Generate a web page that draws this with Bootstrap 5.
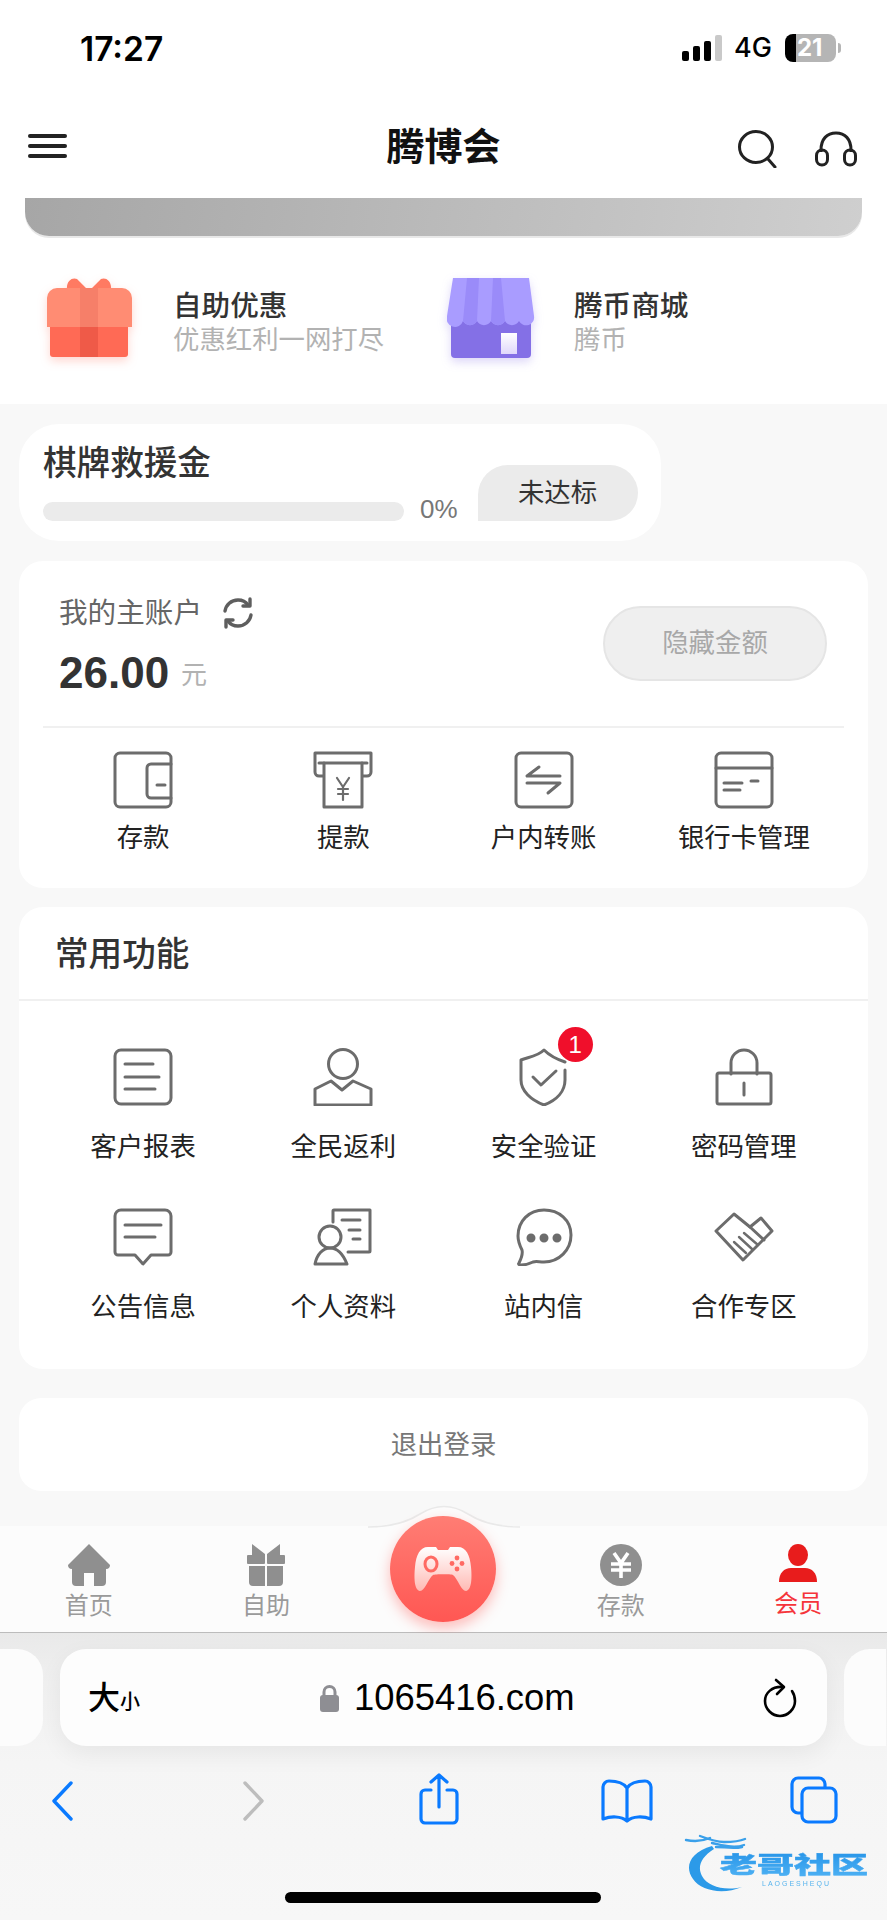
<!DOCTYPE html>
<html lang="zh-CN">
<head>
  <meta charset="UTF-8" />
  <meta name="viewport" content="width=device-width, initial-scale=1.0" />
  <title>腾博会</title>
  <link href="https://cdn.jsdelivr.net/npm/bootstrap@5.3.0/dist/css/bootstrap.min.css" rel="stylesheet" />
  <style>
    body {
      width: 887px;
      height: 1920px;
      overflow: hidden;
      background-color: #f8f8f8;
      font-family: "Liberation Sans", "Noto Sans CJK SC", sans-serif;
      color: #222;
    }
    svg { display: block; }
    .line-ico { fill: none; stroke: #6c6c6c; stroke-width: 3; stroke-linejoin: round; stroke-linecap: round; }
    .status-row { height: 100px; padding: 33px 46px 0 80px; background: #fff; }
    .status-time { font: 600 33.5px/1 Inter, sans-serif; color: #000; }
    .status-net { font: 500 27px/1 Inter, sans-serif; color: #000; margin: 1px 13px 0 12px; }
    .signal { margin-top: 2px; }
    .batt { width: 51px; height: 28px; margin-top: 1px; border-radius: 8px; background: linear-gradient(90deg, #000 0 11px, #b5b5b5 11px); color: #fff; font: 700 24px/28px Inter, sans-serif; padding-left: 12px; }
    .batt-nub { width: 3px; height: 10px; background: #b5b5b5; border-radius: 0 3px 3px 0; margin: 10px 0 0 2px; }
    .top-head { height: 98px; background: #fff; padding: 0 29px 0 28px; }
    .burger { width: 39px; margin-bottom: 6px; }
    .burger i { display: block; height: 4px; background: #222; border-radius: 2px; margin-bottom: 6px; }
    .top-title { font-size: 38px; font-weight: 700; color: #111; left: 0; right: 0; top: 18px; line-height: 58px; }
    .head-tools { gap: 37px; }
    .promo-wrap { background: #fff; height: 206px; padding: 0 25px; }
    .grey-band { height: 38px; border-radius: 0 0 24px 24px; background: linear-gradient(100deg, #a6a6a6, #cfcfcf); box-shadow: 0 2px 0 #e8e8e8; }
    .promo-row { padding: 42px 0 0 22px; }
    .promo-cell { width: 400px; gap: 41px; }
    .promo-cell.is-shop { gap: 39px; }
    .promo-gift { filter: drop-shadow(0 4px 5px rgba(255, 110, 90, .28)); }
    .promo-shop { filter: drop-shadow(0 4px 5px rgba(132, 112, 230, .28)); }
    .promo-name { font-size: 28.6px; font-weight: 500; color: #333; line-height: 38px; margin-top: 9px; }
    .promo-sub { font-size: 26.4px; color: #b2b2b2; line-height: 34px; margin-top: -2px; }
    .rescue-box { width: 642px; height: 117px; margin: 20px 0 20px 19px; background: #fff; border-radius: 40px; padding: 16px 23px 0 24px; }
    .rescue-title { font-size: 33.6px; font-weight: 500; line-height: 48px; color: #333; }
    .rescue-body { margin-top: -23px; }
    .rescue-bar { width: 361px; height: 19px; border-radius: 10px; background: #ebebeb; }
    .rescue-pct { font: 26px/24px "Liberation Sans", sans-serif; color: #777; margin: 0 20px 0 16px; }
    .rescue-btn { width: 160px; height: 56px; font-size: 26.4px; line-height: 56px; text-align: center; background: #ebebeb; color: #333; border-radius: 30px 28px 28px 0; }
    .white-panel { margin: 0 19px; background: #fff; border-radius: 24px; }
    .acct-panel { height: 327px; padding: 0 24px; margin-bottom: 19px; }
    .acct-top { height: 167px; padding: 30px 17px 0 16px; border-bottom: 2px solid #f0f0f0; }
    .acct-label { font-size: 28.6px; line-height: 44px; color: #666; }
    .refresh-ico { margin-left: 20px; }
    .acct-money { font: 700 44px/50px "Liberation Sans", sans-serif; color: #333; margin-top: 13px; }
    .acct-unit { font-size: 26px; color: #b2b2b2; margin: 15px 0 0 12px; line-height: 50px; }
    .hide-btn { width: 224px; height: 75px; margin-top: 15px; border: 2px solid #e5e5e5; border-radius: 38px; background: #efefef; color: #a8a8a8; font-size: 26.4px; line-height: 71px; text-align: center; }
    .ico-cell { text-align: center; }
    .ico-label { font-size: 26.4px; line-height: 36px; color: #222; }
    .acct-links { padding-top: 23px; }
    .acct-links .ico-label { margin-top: 11px; }
    .func-panel { height: 462px; margin-bottom: 29px; }
    .func-title { height: 94px; padding-left: 36px; font-size: 33.6px; font-weight: 500; line-height: 95px; color: #333; border-bottom: 2px solid #f0f0f0; }
    .func-grid { padding: 47px 24px 0; }
    .func-grid .ico-cell { height: 160px; }
    .func-grid .ico-label { margin-top: 23px; }
    .ico-holder { width: 60px; height: 58px; margin: 0 auto; }
    .red-dot { width: 35px; height: 35px; border-radius: 50%; background: #f00f2b; color: #fff; font-size: 24px; line-height: 35px; top: -21px; left: 44px; }
    .logout-panel { height: 93px; line-height: 95px; text-align: center; font-size: 26.4px; color: #777; margin-bottom: 35px; border-radius: 22px; }
    .tab-bar { height: 107px; background: #fcfcfc; border-bottom: 1px solid #bcbcbc; }
    .tab-item { width: 20%; text-align: center; padding-top: 18px; font-size: 24px; line-height: 36px; color: #9a9a9a; }
    .tab-item.is-on { color: #f5343a; }
    .tab-item svg { margin: 0 auto 2px; }
    .bump { left: 368px; top: -21px; }
    .game-btn { width: 106px; height: 106px; left: 390px; top: -10px; border-radius: 50%; background: linear-gradient(180deg, #ff7d74, #ff5753); box-shadow: 0 6px 14px rgba(255, 90, 85, .4); }
    .safari { height: 287px; background: linear-gradient(180deg, #e9e9e9 0, #f0f0f0 50px, #f5f5f5 130px, #f7f7f7 100%); }
    .url-row { padding-top: 16px; gap: 17px; }
    .url-side { width: 43px; height: 97px; background: #fcfcfc; flex: none; }
    .url-side.on-left { border-radius: 0 26px 26px 0; }
    .url-side.on-right { border-radius: 26px 0 0 26px; width: 42px; }
    .url-field { width: 767px; height: 97px; flex: none; background: #fdfdfd; border-radius: 26px; padding: 0 30px 0 28px; box-shadow: 0 8px 24px rgba(0, 0, 0, .06); }
    .text-size { font-size: 32px; font-weight: 500; color: #000; line-height: 1; width: 232px; }
    .text-size span { font-size: 20px; }
    .url-host { font-size: 36.4px; color: #000; line-height: 1; margin: 2px 0 0 15px; }
    .nav-row { left: 0; top: 134px; width: 887px; height: 60px; }
    .home-bar { width: 316px; height: 11px; border-radius: 6px; background: #000; left: 285px; top: 259px; }
    .wm-mark { left: 682px; top: 200px; filter: blur(.5px); }
    .wm-title { stroke: url(#wmBlue); stroke-width: .8px; }
  </style>
</head>
<body>
  <!-- status bar -->
  <div class="status-row d-flex justify-content-between">
    <div class="status-time">17:27</div>
    <div class="d-flex align-items-start">
      <svg class="signal" width="40" height="26" viewBox="0 0 40 26">
        <rect x="0" y="16" width="7" height="10" rx="2" fill="#000"/>
        <rect x="11" y="11" width="7" height="15" rx="2" fill="#000"/>
        <rect x="22" y="6" width="7" height="20" rx="2" fill="#000"/>
        <rect x="33" y="0" width="7" height="26" rx="2" fill="#c9c9c9"/>
      </svg>
      <div class="status-net">4G</div>
      <div class="batt">21</div>
      <div class="batt-nub"></div>
    </div>
  </div>

  <!-- title bar -->
  <div class="top-head d-flex justify-content-between align-items-center position-relative">
    <div class="burger"><i></i><i></i><i class="mb-0"></i></div>
    <div class="top-title position-absolute text-center">腾博会</div>
    <div class="head-tools d-flex align-items-center">
      <svg width="40" height="38" viewBox="0 0 40 38" fill="none" stroke="#222" stroke-width="3" stroke-linecap="round">
        <ellipse cx="19" cy="17" rx="16.5" ry="15.5"/>
        <path d="M31 29l7 8"/>
      </svg>
      <svg width="44" height="36" viewBox="0 0 44 36" fill="none" stroke="#222" stroke-width="3">
        <path d="M7 21V19C7 8 13 2 22 2s15 6 15 17v2"/>
        <rect x="2.5" y="19" width="11" height="15" rx="5.5"/>
        <rect x="30.5" y="19" width="11" height="15" rx="5.5"/>
      </svg>
    </div>
  </div>

  <!-- grey banner and promos -->
  <div class="promo-wrap">
    <div class="grey-band"></div>
    <div class="promo-row d-flex">
      <div class="promo-cell d-flex">
        <svg class="promo-gift" width="85" height="84" viewBox="0 0 85 84">
          <path d="M20 12C19 3 25 -1 30 1l12 12 12-12c5-2 11 2 10 11z" fill="#ff7a62"/>
          <rect x="3" y="38" width="78" height="41" rx="3" fill="#ff6a55"/>
          <rect x="33" y="38" width="18" height="41" fill="#ef5a48"/>
          <path d="M0 20a10 10 0 0 1 10-10h65a10 10 0 0 1 10 10v29H0z" fill="#ff8c73"/>
          <rect x="33" y="10" width="18" height="39" fill="#f67f69"/>
        </svg>
        <div>
          <div class="promo-name">自助优惠</div>
          <div class="promo-sub">优惠红利一网打尽</div>
        </div>
      </div>
      <div class="promo-cell is-shop d-flex">
        <svg class="promo-shop" width="88" height="84" viewBox="0 0 88 84">
          <defs>
            <linearGradient id="doorFill" x1="0" y1="0" x2="0" y2="1"><stop offset="0" stop-color="#fff"/><stop offset="1" stop-color="#e0d8fb"/></linearGradient>
          </defs>
          <path d="M4 40h80v36a4 4 0 0 1-4 4H8a4 4 0 0 1-4-4z" fill="#8470e6"/>
          <rect x="54" y="55" width="16" height="21" fill="url(#doorFill)"/>
          <path d="M6 0h76l5 38a8 8 0 0 1-15 5 8 8 0 0 1-14 0 8 8 0 0 1-14 0 8 8 0 0 1-14 0 8 8 0 0 1-14 0A8 8 0 0 1 0 38z" fill="#a99cff"/>
          <path d="M20 0h12l-2 43a8 8 0 0 1-14 0zM46 0h-4h12l4 43a8 8 0 0 1-14 0z" fill="#9a8bf9"/>
        </svg>
        <div>
          <div class="promo-name">腾币商城</div>
          <div class="promo-sub">腾币</div>
        </div>
      </div>
    </div>
  </div>

  <!-- rescue fund -->
  <div class="rescue-box">
    <div class="rescue-title">棋牌救援金</div>
    <div class="rescue-body d-flex align-items-end">
      <div class="rescue-bar"></div>
      <div class="rescue-pct">0%</div>
      <div class="rescue-btn">未达标</div>
    </div>
  </div>

  <!-- account -->
  <div class="white-panel acct-panel">
    <div class="acct-top d-flex justify-content-between">
      <div>
        <div class="d-flex align-items-center">
          <div class="acct-label">我的主账户</div>
          <svg class="refresh-ico" width="32" height="32" viewBox="0 0 32 32" fill="none" stroke="#5e5e5e" stroke-width="3.4" stroke-linecap="round" stroke-linejoin="round">
            <path d="M3 14C4 8 9 3 16 3c4 0 8 2 10 5"/>
            <path d="M28 2v7h-7"/>
            <path d="M29 18c-1 6-6 11-13 11-4 0-8-2-10-5"/>
            <path d="M4 30v-7h7"/>
          </svg>
        </div>
        <div class="d-flex">
          <div class="acct-money">26.00</div>
          <div class="acct-unit">元</div>
        </div>
      </div>
      <div class="hide-btn">隐藏金额</div>
    </div>
    <div class="row g-0 acct-links">
      <div class="col-3 ico-cell">
        <svg class="ico-holder line-ico" viewBox="0 0 60 58">
          <rect x="2" y="2" width="56" height="54" rx="5"/>
          <path d="M58 13H38a4 4 0 0 0-4 4v26a4 4 0 0 0 4 4h20"/>
          <path d="M44 34h8"/>
        </svg>
        <div class="ico-label">存款</div>
      </div>
      <div class="col-3 ico-cell">
        <svg class="ico-holder line-ico" viewBox="0 0 60 58">
          <path d="M10 25H6a4 4 0 0 1-4-4V2h56v19a4 4 0 0 1-4 4h-4"/>
          <path d="M6 12h48"/>
          <path d="M11 12v44h38V12"/>
          <path d="M24 27l6 9 6-9M30 36v13M25 38h10M25 43h10" stroke-width="2.2"/>
        </svg>
        <div class="ico-label">提款</div>
      </div>
      <div class="col-3 ico-cell">
        <svg class="ico-holder line-ico" viewBox="0 0 60 58">
          <rect x="2" y="2" width="56" height="54" rx="5"/>
          <path d="M25 16L13 25h33"/>
          <path d="M13 32h33L34 42"/>
        </svg>
        <div class="ico-label">户内转账</div>
      </div>
      <div class="col-3 ico-cell">
        <svg class="ico-holder line-ico" viewBox="0 0 60 58">
          <rect x="2" y="2" width="56" height="54" rx="5"/>
          <path d="M2 17h56"/>
          <path d="M10 32h18M10 39h16M37 30h7"/>
        </svg>
        <div class="ico-label">银行卡管理</div>
      </div>
    </div>
  </div>

  <!-- common functions -->
  <div class="white-panel func-panel">
    <div class="func-title">常用功能</div>
    <div class="row g-0 func-grid">
      <div class="col-3 ico-cell">
        <svg class="ico-holder line-ico" viewBox="0 0 60 58">
          <rect x="2" y="2" width="56" height="54" rx="6"/>
          <path d="M12 16h28M12 29h34M12 41h30"/>
        </svg>
        <div class="ico-label">客户报表</div>
      </div>
      <div class="col-3 ico-cell">
        <svg class="ico-holder line-ico" viewBox="0 0 60 58">
          <circle cx="30" cy="16" r="14.5"/>
          <path d="M2 57V41l16-8 11 9 11-9 18 8v16z"/>
        </svg>
        <div class="ico-label">全民返利</div>
      </div>
      <div class="col-3 ico-cell">
        <div class="ico-holder position-relative">
          <svg class="line-ico" width="60" height="58" viewBox="0 0 60 58">
            <path d="M51 14C42 11 36 8 30 2 24 8 15 9 7 12v20c0 11 10 20 23 25 13-5 21-14 21-25V22"/>
            <path d="M19 29l8 8 15-14"/>
          </svg>
          <div class="red-dot position-absolute">1</div>
        </div>
        <div class="ico-label">安全验证</div>
      </div>
      <div class="col-3 ico-cell">
        <svg class="ico-holder line-ico" viewBox="0 0 60 58">
          <path d="M17 26V15a13 13 0 0 1 26 0v11"/>
          <rect x="3" y="25" width="54" height="31" rx="2"/>
          <path d="M30 35v12"/>
        </svg>
        <div class="ico-label">密码管理</div>
      </div>
      <div class="col-3 ico-cell">
        <svg class="ico-holder line-ico" viewBox="0 0 60 58">
          <path d="M8 2h44a6 6 0 0 1 6 6v36a3 3 0 0 1-3 3H38l-8 9-8-9H5a3 3 0 0 1-3-3V8a6 6 0 0 1 6-6z"/>
          <path d="M12 17h36M12 29h30"/>
        </svg>
        <div class="ico-label">公告信息</div>
      </div>
      <div class="col-3 ico-cell">
        <svg class="ico-holder line-ico" viewBox="0 0 60 58">
          <path d="M20 14V3a1 1 0 0 1 1-1h36v41a1 1 0 0 1-1 1H35"/>
          <path d="M29 12h18M36 22h11M40 31h7"/>
          <circle cx="17" cy="29" r="11"/>
          <path d="M2 56c2-10 8-16 15-16s13 6 17 16z"/>
        </svg>
        <div class="ico-label">个人资料</div>
      </div>
      <div class="col-3 ico-cell">
        <svg class="ico-holder line-ico" viewBox="0 0 60 58">
          <path d="M30 2C15 2 4 13 4 28c0 5 2 10 4 14 1 4-1 9-3 13-1 1 0 2 2 2 4 0 8-1 12-3 3-1 6 0 11 0 15 0 27-12 27-27S45 2 30 2z"/>
          <circle cx="17" cy="30" r="3" fill="#6c6c6c"/>
          <circle cx="30" cy="30" r="3" fill="#6c6c6c"/>
          <circle cx="43" cy="30" r="3" fill="#6c6c6c"/>
        </svg>
        <div class="ico-label">站内信</div>
      </div>
      <div class="col-3 ico-cell">
        <svg class="ico-holder line-ico" viewBox="0 0 60 58">
          <path d="M20 6L2 23l27 29 29-29-11-13-11 9z"/>
          <path d="M36 19l14 13"/>
          <path d="M20 34l12 11M25 29l13 12M30 25l14 12" stroke-width="2.4"/>
        </svg>
        <div class="ico-label">合作专区</div>
      </div>
    </div>
  </div>

  <div class="white-panel logout-panel">退出登录</div>

  <!-- tabs -->
  <div class="tab-bar d-flex position-relative">
    <svg class="bump position-absolute" width="152" height="24" viewBox="0 0 152 24">
      <path d="M0 22c22 0 38-4 52-13 16-10 32-10 48 0 14 9 30 13 52 13v2H0z" fill="#fcfcfc" stroke="none"/>
      <path d="M0 22c22 0 38-4 52-13 16-10 32-10 48 0 14 9 30 13 52 13" fill="none" stroke="#e9e9e9" stroke-width="1.5"/>
    </svg>
    <div class="tab-item">
      <svg width="42" height="42" viewBox="0 0 42 42" fill="#8f8f8f">
        <path d="M21 0L0 21c0 2 1 4 4 4v13a4 4 0 0 0 4 4h8V29h10v13h8a4 4 0 0 0 4-4V25c3 0 4-2 4-4z"/>
      </svg>
      首页
    </div>
    <div class="tab-item">
      <svg width="38" height="42" viewBox="0 0 38 42" fill="#8f8f8f">
        <path d="M5 0l13 10v3H5zM33 0L20 10v3h13z"/>
        <rect x="0" y="11" width="18" height="9" rx="1"/>
        <rect x="20" y="11" width="18" height="9" rx="1"/>
        <path d="M2 22h16v20H6a4 4 0 0 1-4-4zM20 22h16v16a4 4 0 0 1-4 4H20z"/>
      </svg>
      自助
    </div>
    <div class="tab-item"></div>
    <div class="tab-item">
      <svg width="42" height="42" viewBox="0 0 42 42">
        <circle cx="21" cy="21" r="21" fill="#8f8f8f"/>
        <path d="M14 9l7 10 7-10M11 20h20M11 26h20M21 19v15" fill="none" stroke="#fff" stroke-width="3.6"/>
      </svg>
      存款
    </div>
    <div class="tab-item is-on">
      <svg width="38" height="40" viewBox="0 0 38 40" fill="#e81c1c">
        <ellipse cx="19" cy="11" rx="10" ry="11"/>
        <path d="M0 38c0-9 5-14 12-14h14c7 0 12 5 12 14z"/>
      </svg>
      会员
    </div>
    <div class="game-btn position-absolute d-flex align-items-center justify-content-center">
      <svg width="58" height="44" viewBox="0 0 58 44">
        <defs>
          <linearGradient id="padFill" x1="0" y1="0" x2="0" y2="1"><stop offset="0" stop-color="#fff"/><stop offset="1" stop-color="#ffbab4"/></linearGradient>
        </defs>
        <path d="M14 0h8l2 3h10l2-3h8c8 0 12 8 13 20 1 10 1 23-5 24-5 0-8-12-13-16-2-1-18-1-20 0C14 32 11 44 6 44 0 43 0 30 1 20 2 8 6 0 14 0z" fill="url(#padFill)"/>
        <ellipse cx="17" cy="17" rx="6" ry="7" fill="none" stroke="#ff6a63" stroke-width="3"/>
        <circle cx="43" cy="11" r="2.4" fill="#ff6a63"/>
        <circle cx="43" cy="22" r="2.4" fill="#ff6a63"/>
        <circle cx="38" cy="16.5" r="2.4" fill="#ff6a63"/>
        <circle cx="48" cy="16.5" r="2.4" fill="#ff6a63"/>
      </svg>
    </div>
  </div>

  <!-- browser chrome -->
  <div class="safari position-relative">
    <div class="url-row d-flex">
      <div class="url-side on-left"></div>
      <div class="url-field d-flex align-items-center">
        <div class="text-size">大<span>小</span></div>
        <svg width="19" height="28" viewBox="0 0 19 28">
          <path d="M4 13V8a5.5 5.5 0 0 1 11 0v5" fill="none" stroke="#8e8e93" stroke-width="3"/>
          <rect x="0" y="11" width="19" height="17" rx="3" fill="#8e8e93"/>
        </svg>
        <div class="url-host flex-grow-1">1065416.com</div>
        <svg width="34" height="40" viewBox="0 0 34 40" fill="none" stroke="#000" stroke-width="2.6" stroke-linecap="round" stroke-linejoin="round">
          <path d="M20 9C9 8 2 15 2 23c0 8 7 15 15 15s15-7 15-15c0-4-1-7-3-10"/>
          <path d="M13 2l8 7-7 7"/>
        </svg>
      </div>
      <div class="url-side on-right"></div>
    </div>
    <div class="nav-row position-absolute">
      <svg class="position-absolute" style="left:51px;top:14px" width="22" height="40" viewBox="0 0 22 40" fill="none" stroke="#0a7aff" stroke-width="3.4" stroke-linecap="round" stroke-linejoin="round"><path d="M20 2L3 20l17 18"/></svg>
      <svg class="position-absolute" style="left:243px;top:14px" width="22" height="40" viewBox="0 0 22 40" fill="none" stroke="#bdbdbd" stroke-width="3.4" stroke-linecap="round" stroke-linejoin="round"><path d="M2 2l17 18L2 38"/></svg>
      <svg class="position-absolute" style="left:419px;top:6px" width="40" height="52" viewBox="0 0 40 52" fill="none" stroke="#0a7aff" stroke-width="3.2" stroke-linecap="round" stroke-linejoin="round">
        <path d="M12 17H6a4 4 0 0 0-4 4v25a4 4 0 0 0 4 4h28a4 4 0 0 0 4-4V21a4 4 0 0 0-4-4h-6"/>
        <path d="M20 34V2M12 9l8-7 8 7"/>
      </svg>
      <svg class="position-absolute" style="left:601px;top:12px" width="52" height="44" viewBox="0 0 52 44" fill="none" stroke="#0a7aff" stroke-width="3.2" stroke-linejoin="round">
        <path d="M26 9C22 3 15 2 8 2a6 6 0 0 0-6 6v32c8-3 18-3 24 2 6-5 16-5 24-2V8a6 6 0 0 0-6-6c-7 0-14 1-18 7zM26 9v33"/>
      </svg>
      <svg class="position-absolute" style="left:790px;top:9px" width="48" height="48" viewBox="0 0 48 48" fill="none" stroke="#0a7aff" stroke-width="3.2">
        <path d="M11 37H8a6 6 0 0 1-6-6V8a6 6 0 0 1 6-6h21a6 6 0 0 1 6 6v3"/>
        <rect x="12" y="12" width="34" height="34" rx="6"/>
      </svg>
    </div>
    <svg class="wm-mark position-absolute" width="192" height="66" viewBox="0 0 192 66">
      <defs>
        <linearGradient id="wmBlue" x1="0" y1="0" x2="0" y2="1"><stop offset="0" stop-color="#1f8fe6"/><stop offset="1" stop-color="#52b4f5"/></linearGradient>
      </defs>
      <path d="M30 13C8 19 2 34 11 46c8 12 30 16 49 8-17 4-34 0-40-11-5-9-1-19 12-27z" fill="#2c9ae8"/>
      <path d="M4 7c10 2 17 1 24-2M18 3c8 3 16 6 24 6 6 0 14 0 21-3M30 10c10 2 22 6 32 2M34 14c8 0 18 2 26 0" fill="none" stroke="#3aa0ea" stroke-width="2.4" stroke-linecap="round"/>
      <text class="wm-title" x="38" y="40" transform="translate(0 15.4) scale(1 .62)" font-family="'Noto Sans CJK SC', sans-serif" font-weight="900" font-size="37" fill="url(#wmBlue)">老哥社区</text>
      <text x="80" y="53" font-family="'Liberation Sans', sans-serif" font-size="7" letter-spacing="2" fill="#58b4ee">LAOGESHEQU</text>
    </svg>
    <div class="home-bar position-absolute"></div>
  </div>
  <script src="https://cdn.jsdelivr.net/npm/bootstrap@5.3.0/dist/js/bootstrap.bundle.min.js"></script>
</body>
</html>
